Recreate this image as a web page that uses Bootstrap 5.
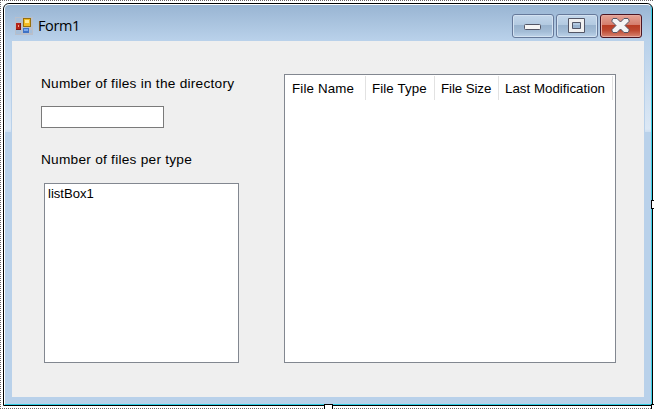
<!DOCTYPE html>
<html lang="en">
<head>
<meta charset="utf-8">
<title>Form1</title>
<link href="https://cdn.jsdelivr.net/npm/bootstrap@5.3.0/dist/css/bootstrap.min.css" rel="stylesheet">
<style>
html,body{width:654px;height:409px;overflow:hidden;background:#fff}
body{font-family:"Liberation Sans",Arial,sans-serif;font-size:13.33px;line-height:16px;color:#000}
.designer{width:654px;height:409px;padding:3px 1px 3px 3px;
 background:
 repeating-linear-gradient(90deg,#6b6468 0 1px,#fff 1px 2px) 0 0/100% 1px no-repeat,
 repeating-linear-gradient(90deg,#6b6468 0 1px,#fff 1px 2px) 0 100%/100% 1px no-repeat,
 repeating-linear-gradient(#6b6468 0 1px,#fff 1px 2px) 0 0/1px 100% no-repeat,#fff}
.window{width:650px;height:403px;border:1px solid #000;border-radius:6px 6px 0 0;overflow:hidden;
 background:linear-gradient(#98b4d2,#b9d1ea 36px,#b9d1ea)}
.frame{height:401px;border:solid;border-width:1px 1px 1px 1px;border-color:#fff #3bd0e6 #2fcbe2 #fff;border-radius:5px 5px 0 0;padding:0 7px 7px;
 background:
 linear-gradient(#b9d1ea00,#dce8f5 88px,#cfe0f2 90px) 0 36px/6px 91px no-repeat,
 linear-gradient(#b9d1ea00,#dce8f5 88px,#cfe0f2 90px) 100% 36px/6px 91px no-repeat}
.titlebar{height:36px;padding:9px 2px 0 3px}
.caption{font-family:"Open Sans","Noto Sans",sans-serif;font-size:14.5px;line-height:20px;letter-spacing:-.4px;margin:2px 0 0 5px}
.app-icon{margin-top:3px}
.win-btns{gap:2px}
.win-btn{width:42px;height:24px;border:1px solid #66799a;border-radius:3px;box-shadow:inset 0 0 0 1px #d3e2f1;
 background:linear-gradient(#c4d7eb,#b3cae1 44%,#98b2cd 45%,#a3bcd6 75%,#bdd3e9)}
.win-btn.closer{border-color:#4b1522;box-shadow:inset 0 0 0 1px #e6aa9f;background:linear-gradient(#e5a496,#d57d6d 44%,#b83b22 45%,#bd4830 70%,#d88572)}
.client{height:356px;background:#efefef;padding:33px 28px 0 29px}
.left-pane{width:200px}
.lbl{letter-spacing:.24px;font-size:13.7px;margin-top:2px}
.text-field{width:123px;height:22px;margin-top:14px;background:#fff;border:1px solid #7a7a7a}
.lbl-type{margin-top:24px}
.list-box{width:195px;height:180px;margin:15px 0 0 3px;padding:2px 3px;background:#fff;border:1px solid #828790;font-size:13.1px}
.list-view{width:332px;height:289px;background:#fff;border:1px solid #828790}
.head{height:25px}
.head>div{border-right:1px solid #e2e2e2;margin-top:1px;height:24px;padding:5px 0 0 6px;white-space:nowrap}
.c1{width:81px;letter-spacing:.15px}.head>.c1{padding-left:7px}
.c2{width:69px;letter-spacing:.1px}.c3{width:64px;letter-spacing:-.1px}.c4{width:114px}
.grip{background:#fff;border:1px solid #000;position:absolute}
.g-e{left:651px;top:200px;width:8px;height:9px}
.g-s{left:324px;top:404px;width:9px;height:9px}
.g-se{left:651px;top:404px;width:8px;height:9px}
</style>
<script src="https://cdn.jsdelivr.net/npm/bootstrap@5.3.0/dist/js/bootstrap.bundle.min.js"></script>
</head>
<body class="position-relative m-0">
<div class="designer">
 <div class="window">
  <div class="frame">
   <header class="titlebar d-flex align-items-start">
    <svg class="app-icon" width="18" height="18" viewBox="0 0 18 18">
     <path fill="#b9bfca" d="M0 0h18v18H0z"/><path fill="#a7bfd9" d="M1 1h5v4H1zM1 13h5v4H1zM15 13h2v3h-2z"/>
     <path fill="#b52418" d="M1 6h5v7H1z"/><path fill="#7f130e" d="M1 12h5v1H1zM5 6h1v7H5z"/><path fill="#f6a18b" d="M3 8h1v2H3z"/>
     <path fill="#96700c" d="M8 1h8v9H8z"/><path fill="#f3bb22" d="M9 2h6v7H9z"/><path fill="#ffe894" d="M10 3h4v3h-4z"/>
     <path fill="#3e72c5" d="M8 11h6v5H8z"/><path fill="#79a9ee" d="M9 12h4v2H9z"/>
    </svg>
    <span class="caption">Form1</span>
    <div class="win-btns d-flex ms-auto">
     <div class="win-btn"><svg class="d-block" width="40" height="22"><rect x="11.5" y="9.5" width="16" height="5" rx="1" fill="#f5f5f5" stroke="#535666"/></svg></div>
     <div class="win-btn"><svg class="d-block" width="40" height="22"><path fill="#f1f1f1" stroke="#535666" fill-rule="evenodd" d="M11.500 3.500h16v14h-16zM15.500 7.500v6h8v-6z"/></svg></div>
     <div class="win-btn closer"><svg class="d-block" width="40" height="22"><path fill="#f4f4f4" stroke="#535666" stroke-linejoin="round" d="M12 3.500h4l3.500 3.500L23 3.500h4l1 1.500v1.500L24 10.500l4 4V16l-1 1.500h-4L19.500 14 16 17.500h-4L11 16v-1.500l4-4-4-4V5z"/></svg></div>
    </div>
   </header>
   <main class="client d-flex justify-content-between align-items-start">
    <section class="left-pane">
     <div class="lbl">Number of files in the directory</div>
     <div class="text-field"></div>
     <div class="lbl lbl-type">Number of files per type</div>
     <div class="list-box">listBox1</div>
    </section>
    <section class="list-view">
     <div class="head d-flex"><div class="c1">File Name</div><div class="c2">File Type</div><div class="c3">File Size</div><div class="c4">Last Modification</div></div>
    </section>
   </main>
  </div>
 </div>
</div>
<div class="grip g-e"></div><div class="grip g-s"></div><div class="grip g-se"></div>
</body>
</html>
